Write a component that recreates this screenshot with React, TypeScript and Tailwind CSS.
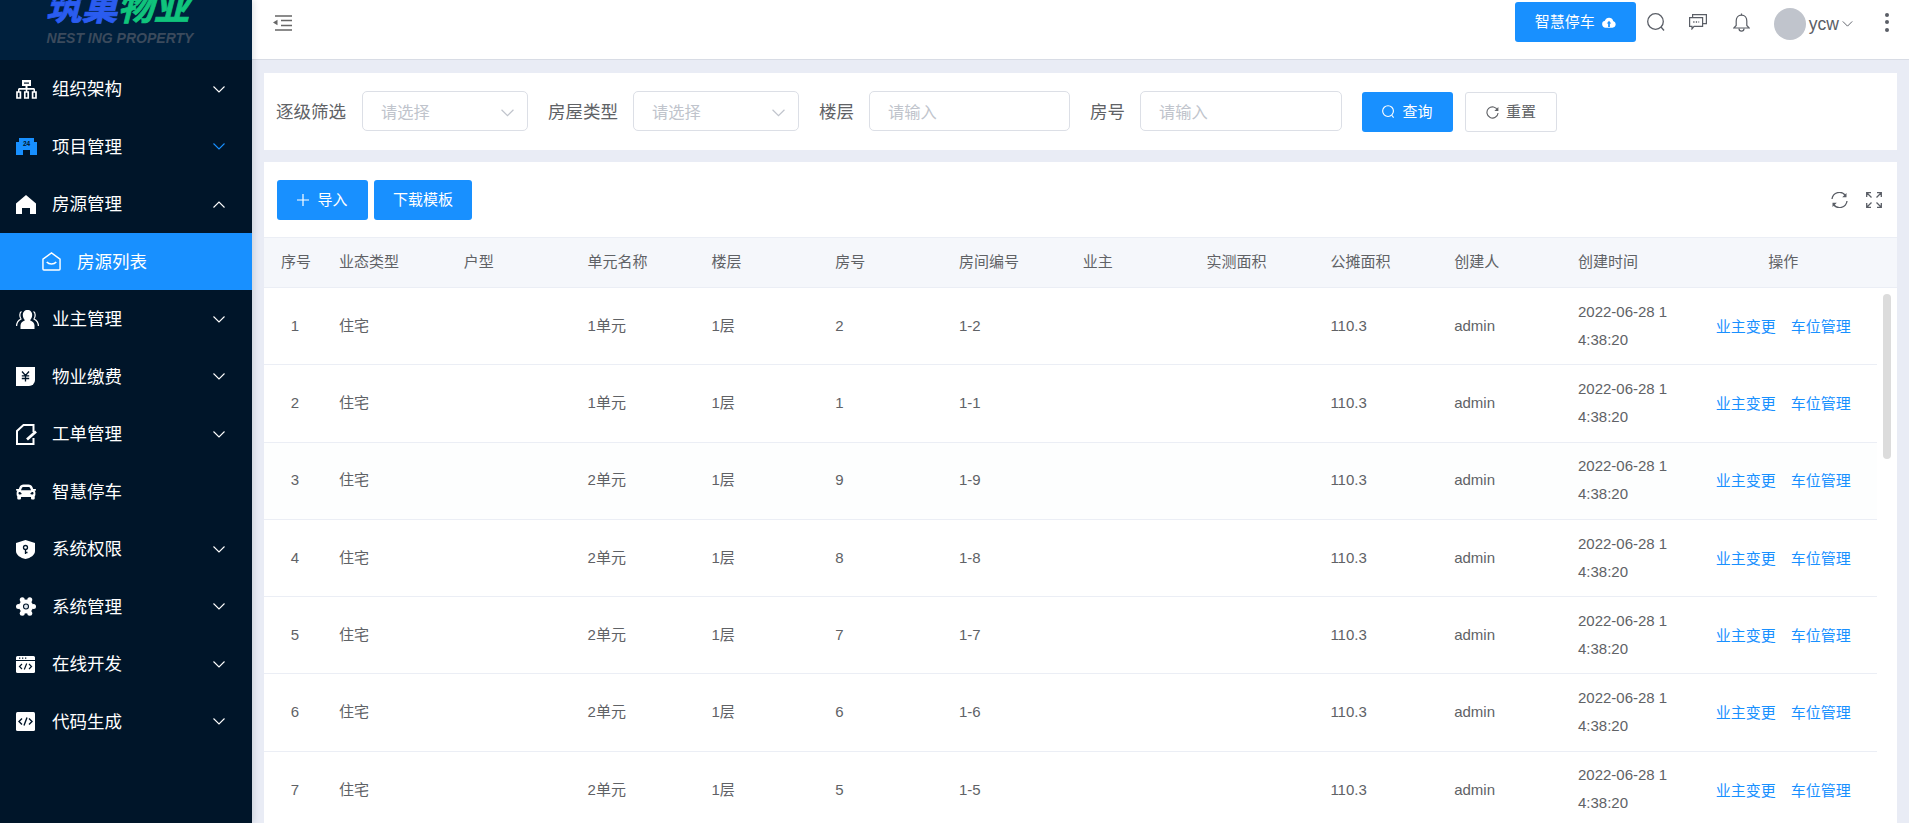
import { FaCar } from 'react-icons/fa'
import type { ReactNode } from 'react'

const Chevron = ({ up = false, className = '' }: { up?: boolean; className?: string }) => (
  <svg viewBox="0 0 12 7" fill="none" stroke="currentColor" strokeWidth="1.1" className={className}>
    <polyline points={up ? '0.5,6.5 6,1 11.5,6.5' : '0.5,0.5 6,6 11.5,0.5'} />
  </svg>
)

const OrgIcon = () => (
  <svg viewBox="0 0 21 19" className="w-[21px] h-[19px]">
    <path fill="#fff" d="M6 0h9v6H6z" />
    <path fill="#001529" d="M8 2.500h5v1.200H8z" />
    <path fill="#fff" d="M2.500 8h16v1.800h-16z M9.500 6h2v3h-2z M2 9h1.500v3H2z M17.500 9H19v3h-1.500z M9.700 9h1.600v3H9.700z" />
    <path fill="none" stroke="#fff" strokeWidth="1.700" d="M1 12h3.400v6H1z M8.800 12h3.400v6H8.800z M16.600 12H20v6h-3.400z" />
  </svg>
)

const BuildingIcon = () => (
  <svg viewBox="0 0 21 17" className="w-[21px] h-[17px]">
    <path fill="#1890ff" d="M3 0h15v4h3v13h-7v-5H7v5H0V4h3z" />
    <text x="10.5" y="8" textAnchor="middle" fontSize="6.5" fontWeight="700" fill="#001529" fontFamily="Liberation Sans">24</text>
  </svg>
)

const HomeIcon = () => (
  <svg viewBox="0 0 20 19" className="w-5 h-[19px]">
    <path fill="#fff" d="M10 0l10 8.500V19h-6v-6H6v6H0V8.500z" />
  </svg>
)

const MailIcon = () => (
  <svg viewBox="0 0 20 20" fill="none" stroke="#fff" strokeWidth="1.500" className="w-[19px] h-[19px]">
    <path d="M1 7.500L10 1l9 6.500V18a1 1 0 0 1-1 1H2a1 1 0 0 1-1-1z" />
    <path d="M5 10.500c2.500 2.800 7.500 2.800 10 0" strokeWidth="1.700" />
  </svg>
)

const UsersIcon = () => (
  <svg viewBox="0 0 23 19" className="w-[23px] h-[19px]">
    <path fill="#fff" d="M11.500 0c2.900 0 4.700 2.100 4.700 5 0 2.300-1 4-2.200 5.200 2.500 1 4.500 2.700 4.500 5.300V19H4.500v-3.500c0-2.600 2-4.300 4.500-5.300C7.800 9 6.800 7.300 6.800 5c0-2.900 1.800-5 4.700-5z" />
    <path fill="none" stroke="#fff" strokeWidth="1.200" d="M5.500 1.500C3.500 2.500 3.300 6.500 5 9 2 10.500.6 13 .6 16 M17.500 1.500c2 1 2.200 5 .5 7.500 3 1.500 4.400 4 4.400 7" />
  </svg>
)

const FeeIcon = () => (
  <svg viewBox="0 0 19 19" className="w-[19px] h-[19px]">
    <path fill="#fff" d="M0 0h19v13a6 6 0 0 1-6 6H0z" />
    <path fill="none" stroke="#001529" strokeWidth="1.300" d="M6 4.500l3.500 4 3.500-4 M9.500 8.500V14.500 M5.800 8.800h7.400 M5.800 11.500h7.400" />
  </svg>
)

const OrderIcon = () => (
  <svg viewBox="0 0 21 21" fill="none" stroke="#fff" className="w-[21px] h-[21px]">
    <path strokeWidth="2" d="M17.500 8V1H7.500L1 7v13h16.500v-6" />
    <path strokeWidth="2.800" d="M11 15.500l9-8" />
  </svg>
)

const ShieldIcon = () => (
  <svg viewBox="0 0 19 19" className="w-[19px] h-[19px]">
    <path fill="#fff" d="M9.500 0l9.500 3v8c0 4-4.500 7-9.500 8C4.500 18 0 15 0 11V3z" />
    <circle cx="9.500" cy="7.500" r="2" fill="none" stroke="#001529" strokeWidth="1.300" />
    <path stroke="#001529" strokeWidth="1.300" d="M9.500 9.500v4.500 M9.500 12.500h2" />
  </svg>
)

const gearTeeth = [
  [17.5, 9.5],
  [13.75, 2.8],
  [6.25, 2.8],
  [2.5, 9.5],
  [6.25, 16.2],
  [13.75, 16.2],
]

const GearIcon = () => (
  <svg viewBox="0 0 20 19" className="w-5 h-[19px]">
    <circle cx="10" cy="9.500" r="7" fill="#fff" />
    {gearTeeth.map(([x, y]) => (
      <circle key={`${x}-${y}`} cx={x} cy={y} r="2.500" fill="#fff" />
    ))}
    <circle cx="10" cy="9.500" r="2.500" fill="#dfe5ec" stroke="#001529" strokeWidth="1.100" />
  </svg>
)

const WindowIcon = () => (
  <svg viewBox="0 0 19 17" className="w-[19px] h-[17px]">
    <path fill="#fff" d="M1.500 0h16A1.500 1.500 0 0 1 19 1.500V4H0V1.500A1.500 1.500 0 0 1 1.500 0z" />
    <path fill="#fff" d="M0 5h19v10.500a1.500 1.500 0 0 1-1.500 1.500h-16A1.500 1.500 0 0 1 0 15.500z" />
    <path fill="#001529" d="M3 1.500h1.300v1.300H3z M6 1.500h1.300v1.300H6z M9 1.500h1.300v1.300H9z" />
    <path fill="none" stroke="#001529" strokeWidth="1.200" d="M6 8l-2.500 2.500L6 13 M13 8l2.500 2.500L13 13 M10.700 7.500l-2.400 6" />
  </svg>
)

const CodeIcon = () => (
  <svg viewBox="0 0 19 19" className="w-[19px] h-[19px]">
    <rect width="19" height="19" rx="1.500" fill="#fff" />
    <path fill="none" stroke="#001529" strokeWidth="1.400" d="M6 6.500l-3 3 3 3 M13 6.500l3 3-3 3 M11 5.500l-3 8" />
  </svg>
)

type MenuItem = { label: string; icon: ReactNode; arrow?: 'down' | 'up' | 'blue'; child?: string }

const menu: MenuItem[] = [
  { label: '组织架构', icon: <OrgIcon />, arrow: 'down' },
  { label: '项目管理', icon: <BuildingIcon />, arrow: 'blue' },
  { label: '房源管理', icon: <HomeIcon />, arrow: 'up', child: '房源列表' },
  { label: '业主管理', icon: <UsersIcon />, arrow: 'down' },
  { label: '物业缴费', icon: <FeeIcon />, arrow: 'down' },
  { label: '工单管理', icon: <OrderIcon />, arrow: 'down' },
  { label: '智慧停车', icon: <FaCar className="w-5 h-5 text-white" /> },
  { label: '系统权限', icon: <ShieldIcon />, arrow: 'down' },
  { label: '系统管理', icon: <GearIcon />, arrow: 'down' },
  { label: '在线开发', icon: <WindowIcon />, arrow: 'down' },
  { label: '代码生成', icon: <CodeIcon />, arrow: 'down' },
]

function Sidebar() {
  return (
    <aside className="w-[252px] h-full shrink-0 bg-[#001529] z-10 shadow-[2px_0_6px_rgba(0,21,41,0.12)]">
      {/* logo runs off the top of the page */}
      <div className="h-[60.4px] bg-[#00203d] overflow-hidden flex flex-col items-center">
        <div className="mt-[-10px] mr-[17px] h-[36px] leading-[36px] text-[36px] font-bold italic whitespace-nowrap [-webkit-text-stroke:0.8px_currentColor]">
          <span className="text-[#2a5cf0]">筑巢</span>
          <span className="text-[#10c47c]">物业</span>
        </div>
        <div className="mt-[5px] mr-[12px] text-[14px] leading-[14px] font-bold italic text-[#3b4a5c] whitespace-nowrap">
          NEST ING PROPERTY
        </div>
      </div>
      {menu.map((item) => (
        <div key={item.label}>
          <div className="h-[57.5px] flex items-center text-white text-[17.5px]">
            <span className="w-[52px] pl-[16px] shrink-0 flex items-center">{item.icon}</span>
            <span>{item.label}</span>
            {item.arrow && (
              <Chevron
                up={item.arrow === 'up'}
                className={`w-3 h-[7px] ml-auto mr-[27px] ${item.arrow === 'blue' ? 'text-[#1890ff]' : 'text-white'}`}
              />
            )}
          </div>
          {item.child && (
            <div className="h-[57.5px] bg-[#1890ff] flex items-center text-white text-[17.5px] pl-[42px]">
              <MailIcon />
              <span className="ml-[16px]">{item.child}</span>
            </div>
          )}
        </div>
      ))}
    </aside>
  )
}

function TopBar() {
  return (
    <header className="h-[60px] shrink-0 bg-white border-b border-[#d8dce5] flex items-start justify-between text-[#5a5e66]">
      <svg viewBox="0 0 19 16" fill="none" stroke="#666" strokeWidth="1.600" className="w-[19px] h-4 ml-[21px] mt-[15px]">
        <path d="M2 1h17 M8 5.500h11 M8 10.500h11 M2 15h17" />
        <path fill="#666" stroke="none" d="M4.500 4.800v5.400L0 7.500z" />
      </svg>
      <div className="h-11 flex items-center">
        <button className="w-[121px] h-10 bg-[#1890ff] rounded-[3px] text-white text-[15px] flex items-center justify-center">
          智慧停车
          <svg viewBox="0 0 16 12" className="w-[14px] h-[11px] ml-[7px]">
            <path fill="#fff" fillRule="evenodd" d="M4 12a4 4 0 0 1-.7-7.900A5 5 0 0 1 12.800 4.200 4 4 0 0 1 12 12z" />
            <path fill="#1890ff" d="M8 4l2.500 3H9v4H7V7H5.500z" />
          </svg>
        </button>
        <svg viewBox="0 0 18 18" fill="none" stroke="#5a5e66" strokeWidth="1.300" className="w-[18px] h-[18px] ml-[11px]">
          <circle cx="8.500" cy="8.500" r="7.800" />
          <path d="M14 14l3 3.500" />
        </svg>
        <svg viewBox="0 0 18 16" fill="none" stroke="#5a5e66" strokeWidth="1.200" className="w-[18px] h-4 ml-[24px]">
          <path d="M.6 3.600h13v8.800H5l-2 2.500v-2.500H.6z" />
          <path d="M3.600 3.600V.6h13.800v9h-3.800" />
          <path stroke="#5a5e66" strokeWidth="1.300" strokeDasharray="1.300 1.300" d="M4.200 8h6" />
        </svg>
        <svg viewBox="0 0 17 19" fill="none" stroke="#5a5e66" strokeWidth="1.200" className="w-[17px] h-[19px] ml-[26px]">
          <path d="M8.500 2.200C5 2.200 3.200 5 3.200 8v4.500L.8 15h15.400l-2.400-2.500V8c0-3-1.800-5.800-5.300-5.800z" />
          <path d="M8.500.4v1.800 M6 15.500c0 3.500 5 3.500 5 0" />
        </svg>
        <div className="w-8 h-8 rounded-full bg-[#c0c4cc] ml-[24px] mt-1" />
        <span className="ml-[3px] mt-1 text-[17.5px]">ycw</span>
        <Chevron className="w-[11px] h-[6px] ml-[3px] mt-1 text-[#5a5e66]" />
        <div className="flex flex-col gap-[3.500px] ml-[32px] mr-5">
          <i className="block w-[4px] h-[4px] rounded-full bg-[#5a5e66]" />
          <i className="block w-[4px] h-[4px] rounded-full bg-[#5a5e66]" />
          <i className="block w-[4px] h-[4px] rounded-full bg-[#5a5e66]" />
        </div>
      </div>
    </header>
  )
}

const SelectBox = () => (
  <div className="w-[166px] h-10 border border-[#dcdfe6] rounded-[5px] flex items-center justify-between pl-[18px] pr-[13px] pt-[3px] text-[16.25px] text-[#c0c4cc]">
    请选择
    <Chevron className="w-[13px] h-[8px] text-[#c0c4cc]" />
  </div>
)

const TextBox = ({ width }: { width: string }) => (
  <input
    placeholder="请输入"
    className={`${width} h-10 border border-[#dcdfe6] rounded-[5px] pl-[18px] pt-[3px] text-[16.25px] outline-none placeholder:text-[#c0c4cc]`}
  />
)

function FilterBar() {
  return (
    <section className="h-[77px] mt-[13px] bg-white flex items-center pl-3 pb-[1px] text-[17.5px] text-[#606266] whitespace-nowrap">
      <span className="mr-4 pt-[3px]">逐级筛选</span>
      <SelectBox />
      <span className="ml-5 mr-[15px] pt-[3px]">房屋类型</span>
      <SelectBox />
      <span className="ml-5 mr-[15px] pt-[3px]">楼层</span>
      <TextBox width="w-[201px]" />
      <span className="ml-5 mr-[15px] pt-[3px]">房号</span>
      <TextBox width="w-[202px]" />
      <button className="ml-5 mt-[2px] w-[91px] h-10 bg-[#1890ff] rounded-[3px] text-white text-[15px] flex items-center justify-center gap-[7px]">
        <svg viewBox="0 0 14 15" fill="none" stroke="#fff" strokeWidth="1.200" className="w-[13px] h-[14px]">
          <circle cx="6.500" cy="6.500" r="5.800" />
          <path d="M10.500 11l2 2.500" />
        </svg>
        查询
      </button>
      <button className="ml-3 mt-[2px] w-[92px] h-10 border border-[#dcdfe6] rounded-[3px] text-[15px] flex items-center justify-center gap-[7px]">
        <svg viewBox="0 0 14 14" fill="none" stroke="#606266" strokeWidth="1.200" className="w-[13px] h-[13px]">
          <path d="M12.500 4.500A6 6 0 1 0 13 7.500" />
          <path fill="#606266" stroke="none" d="M13.300 1v4.400H9z" />
        </svg>
        重置
      </button>
    </section>
  )
}

const columns = ['序号', '业态类型', '户型', '单元名称', '楼层', '房号', '房间编号', '业主', '实测面积', '公摊面积', '创建人', '创建时间', '操作']

const rows = [
  { no: 1, unit: '1单元', room: '2' },
  { no: 2, unit: '1单元', room: '1' },
  { no: 3, unit: '2单元', room: '9' },
  { no: 4, unit: '2单元', room: '8' },
  { no: 5, unit: '2单元', room: '7' },
  { no: 6, unit: '2单元', room: '6' },
  { no: 7, unit: '2单元', room: '5' },
]

const gridCols = 'grid grid-cols-[64px_repeat(11,123.8px)_187px]'

function RoomTable() {
  return (
    <section className="mt-3 flex-1 min-h-0 bg-white overflow-hidden text-[15px] text-[#606266]">
      <div className="h-[75px] flex justify-between pl-[13px] pt-[18px]">
        <div className="flex gap-[6px] text-white">
          <button className="w-[91px] h-10 bg-[#1890ff] rounded-[3px] flex items-center justify-center gap-2">
            <svg viewBox="0 0 12 12" stroke="#fff" strokeWidth="1.200" className="w-3 h-3">
              <path d="M6 0v12 M0 6h12" />
            </svg>
            导入
          </button>
          <button className="w-[98px] h-10 bg-[#1890ff] rounded-[3px]">下载模板</button>
        </div>
        <div className="flex gap-[18px] pt-[12px] pr-[15px]">
          <svg viewBox="0 0 17 16" fill="none" stroke="#5a5e66" strokeWidth="1.300" className="w-[17px] h-4">
            <path d="M1 7a7.500 7.500 0 0 1 13.500-3.500 M16 9a7.500 7.500 0 0 1-13.500 3.500" />
            <path fill="#5a5e66" stroke="none" d="M15.500 1v4.300h-4.300z M1.500 15v-4.300h4.300z" />
          </svg>
          <svg viewBox="0 0 16 16" fill="none" stroke="#5a5e66" strokeWidth="1.300" className="w-4 h-4">
            <path d="M.7 5V.7H5 M11 .7h4.300V5 M.7 11v4.300H5 M11 15.300h4.300V11 M1 1l4.500 4.500 M15 1l-4.500 4.500 M1 15l4.500-4.500 M15 15l-4.500-4.500" />
          </svg>
        </div>
      </div>
      <div className={`${gridCols} h-[51px] pb-[1px] bg-[#f5f7fb] border-y border-[#ebeef5] items-center`}>
        {columns.map((c, i) => (
          <div key={c} className={i === 0 || i === 12 ? 'text-center' : i === 1 ? 'pl-[11px]' : 'px-3'}>
            {c}
          </div>
        ))}
      </div>
      <div className="flex">
        <div className="w-[1613px]">
          {rows.map((r) => (
            <div key={r.no} className={`${gridCols} h-[77.3px] border-b border-[#ebeef5] items-center ${r.no === 3 ? 'bg-[#fdfefe]' : ''}`}>
              <div className="text-center pr-[2px]">{r.no}</div>
              <div className="pl-[11px]">住宅</div>
              <div className="px-3" />
              <div className="px-3">{r.unit}</div>
              <div className="px-3">1层</div>
              <div className="px-3">{r.room}</div>
              <div className="px-3">1-{r.room}</div>
              <div className="px-3" />
              <div className="px-3" />
              <div className="px-3">110.3</div>
              <div className="px-3">admin</div>
              <div className="px-3 leading-[28px] break-all mt-[-1px]">2022-06-28 14:38:20</div>
              <div className="flex justify-center gap-[15px] text-[#1890ff] mt-[2px]">
                <span>业主变更</span>
                <span>车位管理</span>
              </div>
            </div>
          ))}
        </div>
        <div className="w-5 pt-[6px] pl-[6px]">
          <div className="w-2 h-[165px] rounded bg-[#dcdcdc]" />
        </div>
      </div>
    </section>
  )
}

export default function App() {
  return (
    <div className="flex w-full h-screen overflow-hidden bg-[#e9ecf5] font-['Liberation_Sans','Noto_Sans_CJK_SC',sans-serif]">
      <Sidebar />
      <main className="flex-1 min-w-0 flex flex-col">
        <TopBar />
        <div className="flex-1 min-h-0 flex flex-col px-3">
          <FilterBar />
          <RoomTable />
        </div>
      </main>
    </div>
  )
}
